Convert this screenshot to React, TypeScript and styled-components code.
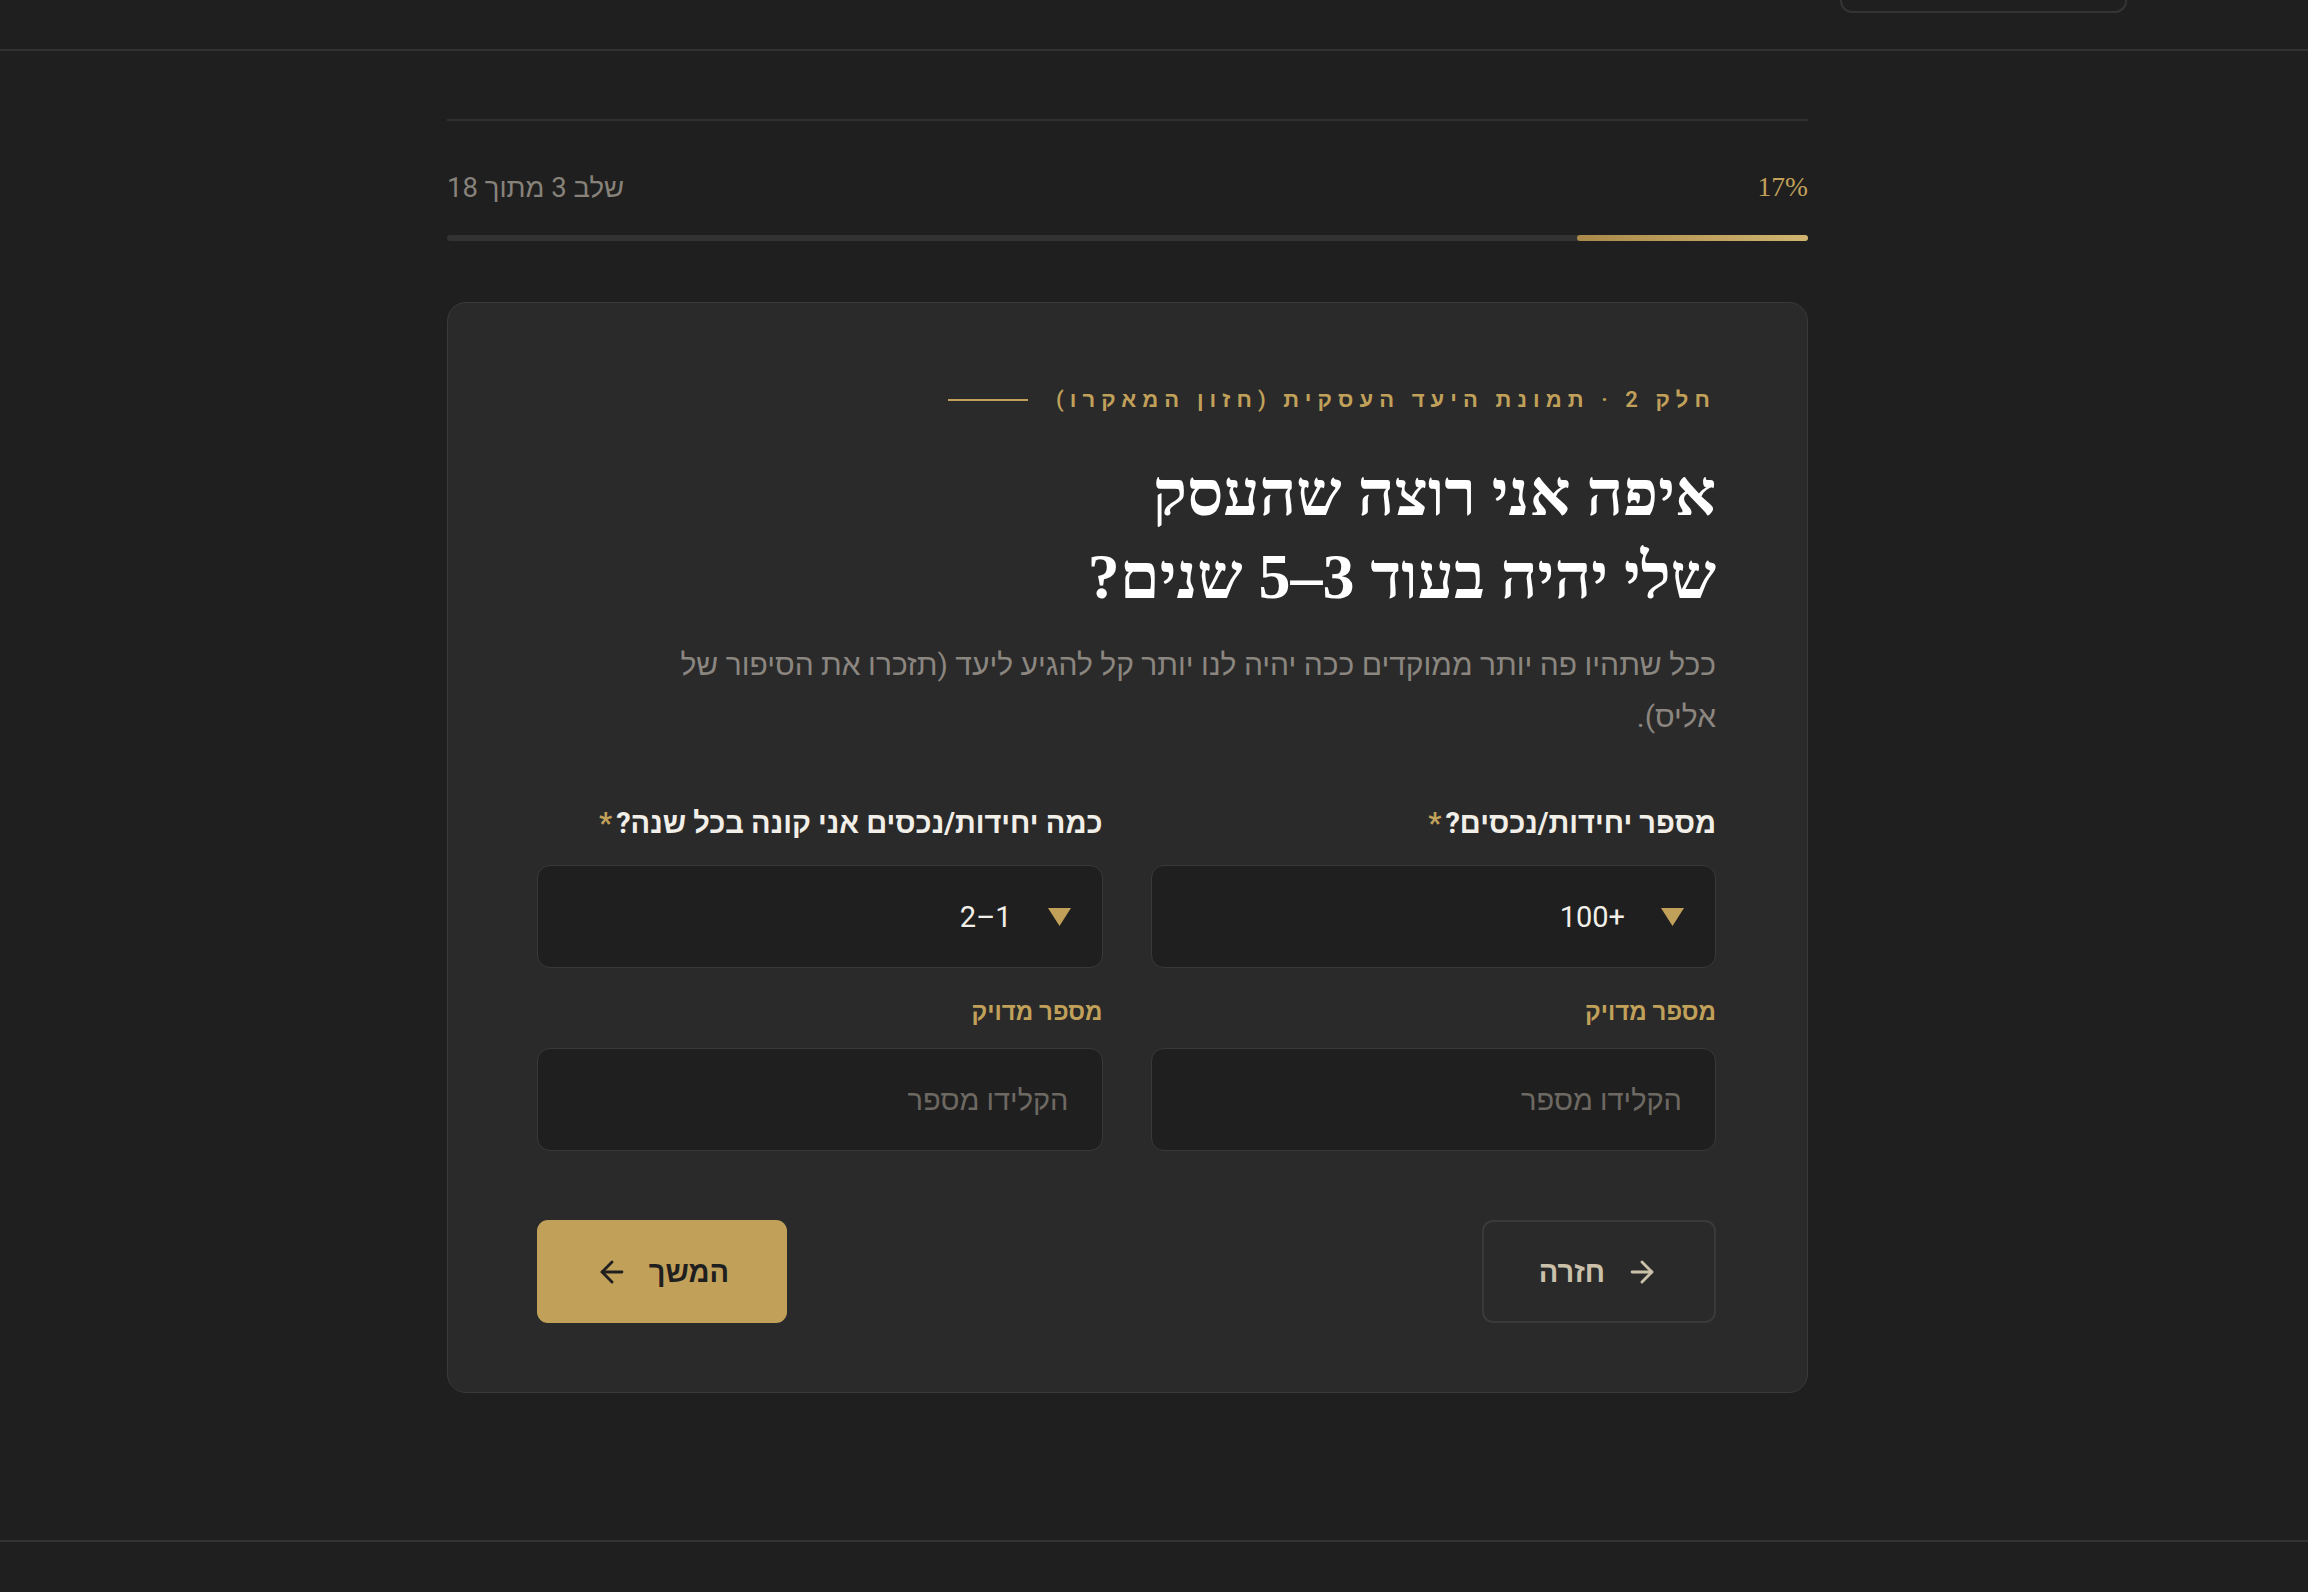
import React from 'react';
import styled, { createGlobalStyle } from 'styled-components';
import { ArrowLeft, ArrowRight } from 'lucide-react';

const GOLD = '#c1a15a';

const GlobalStyle = createGlobalStyle`
  html, body {
    margin: 0;
    padding: 0;
    background: #1f1f1f;
  }

  body {
    font-family: Roboto, "Liberation Sans", sans-serif;
    color: #f2efe9;
  }

  * {
    box-sizing: border-box;
  }
`;

const Page = styled.div`
  min-height: 1592px;
  display: flex;
  flex-direction: column;
`;

const Header = styled.header`
  height: 51px;
  border-bottom: 2px solid #323232;
  display: flex;
  justify-content: flex-start;
  align-items: flex-start;
  padding-right: 181px;
`;

const HeaderButton = styled.div`
  width: 287px;
  height: 13px;
  border: 2px solid #343434;
  border-top: none;
  border-radius: 0 0 12px 12px;
`;

const Main = styled.main`
  flex: 1;
  padding: 68px 53px 0 0;
`;

const Container = styled.div`
  max-width: 1361px;
  margin: 0 auto;
  border-top: 2px solid #303030;
  padding-bottom: 146px;
`;

const ProgressRow = styled.div`
  display: flex;
  justify-content: space-between;
  align-items: center;
  height: 40px;
  margin-top: 46px;
`;

const StepText = styled.span`
  font-size: 27.5px;
  color: #87827a;
`;

const Percent = styled.span`
  font-family: "Liberation Serif", serif;
  font-size: 27.5px;
  color: ${GOLD};
`;

const Track = styled.div`
  height: 6px;
  margin-top: 28px;
  border-radius: 3px;
  background: #333333;
  display: flex;
  justify-content: flex-start;
`;

const Fill = styled.div`
  height: 100%;
  border-radius: 3px;
  background: linear-gradient(to left, #d2b471, #a98a4a);
`;

const Card = styled.section`
  margin-top: 61px;
  background: #2a2a2a;
  border: 1.5px solid #3a3a3a;
  border-radius: 19px;
  padding: 82px 91px 69px 89px;
`;

const Eyebrow = styled.div`
  display: flex;
  align-items: center;
  gap: 28px;
  height: 30px;
`;

const EyebrowText = styled.span`
  font-size: 22px;
  font-weight: 600;
  letter-spacing: 0.277em;
  color: ${GOLD};
`;

const EyebrowLine = styled.span`
  width: 80px;
  height: 2px;
  background: ${GOLD};
`;

const Title = styled.h1`
  margin: 37px 0 0;
  font-family: "Liberation Serif", serif;
  font-weight: 700;
  font-size: 64px;
  line-height: 83px;
  color: #ffffff;
`;

const Subtitle = styled.p`
  margin: 21px 0 0;
  max-width: 1060px;
  font-size: 30px;
  line-height: 52px;
  color: #8b8680;
`;

const Grid = styled.div`
  display: grid;
  grid-template-columns: 1fr 1fr;
  column-gap: 48px;
  margin-top: 60px;
`;

const Field = styled.div`
  display: flex;
  flex-direction: column;
`;

const Label = styled.label`
  font-size: 29px;
  font-weight: 700;
  line-height: 40px;
  color: #f2efe9;
`;

const Required = styled.span`
  color: ${GOLD};
  margin-right: 4px;
`;

const SubLabel = styled.label`
  margin-top: 27px;
  font-size: 24px;
  font-weight: 700;
  line-height: 34px;
  color: ${GOLD};
`;

const Box = styled.div<{ $gap?: number }>`
  height: 103px;
  background: #1f1f1f;
  border: 1.5px solid #393939;
  border-radius: 13px;
  display: flex;
  align-items: center;
  padding: 0 31px;
  margin-top: ${(p) => p.$gap ?? 22}px;
`;

const SelectValue = styled.span`
  font-size: 29px;
  color: #f2efe9;
  margin-right: 36px;
`;

const Placeholder = styled.span`
  font-size: 29px;
  color: #6d6962;
  padding-right: 2px;
`;

const Actions = styled.div`
  display: flex;
  justify-content: space-between;
  margin-top: 69px;
`;

const Button = styled.button<{ $primary?: boolean }>`
  height: 103px;
  width: ${(p) => (p.$primary ? 250 : 234)}px;
  display: flex;
  align-items: center;
  justify-content: center;
  gap: 20px;
  border-radius: 11px;
  font-family: Roboto, "Liberation Sans", sans-serif;
  font-size: 29px;
  font-weight: 600;
  cursor: pointer;
  background: ${(p) => (p.$primary ? GOLD : 'transparent')};
  color: ${(p) => (p.$primary ? '#1f1f1f' : '#cbc1ab')};
  border: ${(p) => (p.$primary ? 'none' : '2px solid #3a3a3a')};
`;

const Footer = styled.footer`
  border-top: 2px solid #323232;
  height: 52px;
`;

function Caret (): React.ReactElement {
  return (
    <svg width='23' height='18' viewBox='0 0 23 18'>
      <polygon points='0,0 23,0 11.5,18' fill={GOLD} />
    </svg>
  );
}

interface SelectProps {
  label: string;
  value: string;
}

function SelectField ({ label, value }: SelectProps): React.ReactElement {
  return (
    <Field>
      <Label>{label}<Required>*</Required></Label>
      <Box>
        <Caret />
        <SelectValue>{value}</SelectValue>
      </Box>
      <SubLabel>מספר מדויק</SubLabel>
      <Box $gap={19}>
        <Placeholder>הקלידו מספר</Placeholder>
      </Box>
    </Field>
  );
}

export default function App (): React.ReactElement {
  const progress = 17;

  return (
    <>
      <GlobalStyle />
      <Page dir='rtl'>
        <Header>
          <HeaderButton />
        </Header>
        <Main>
          <Container>
            <ProgressRow>
              <Percent>{progress}%</Percent>
              <StepText>שלב 3 מתוך 18</StepText>
            </ProgressRow>
            <Track>
              <Fill style={{ width: `${progress}%` }} />
            </Track>

            <Card>
              <Eyebrow>
                <EyebrowText>חלק 2 · תמונת היעד העסקית (חזון המאקרו)</EyebrowText>
                <EyebrowLine />
              </Eyebrow>
              <Title>
                איפה אני רוצה שהעסק
                <br />
                שלי יהיה בעוד 3–5 שנים?
              </Title>
              <Subtitle>
                ככל שתהיו פה יותר ממוקדים ככה יהיה לנו יותר קל להגיע ליעד (תזכרו את הסיפור של אליס).
              </Subtitle>

              <Grid>
                <SelectField label='מספר יחידות/נכסים?' value='+100' />
                <SelectField label='כמה יחידות/נכסים אני קונה בכל שנה?' value='1–2' />
              </Grid>

              <Actions>
                <Button type='button'>
                  <ArrowRight size={34} strokeWidth={2} />
                  חזרה
                </Button>
                <Button type='button' $primary>
                  המשך
                  <ArrowLeft size={34} strokeWidth={2} />
                </Button>
              </Actions>
            </Card>
          </Container>
        </Main>
        <Footer />
      </Page>
    </>
  );
}
